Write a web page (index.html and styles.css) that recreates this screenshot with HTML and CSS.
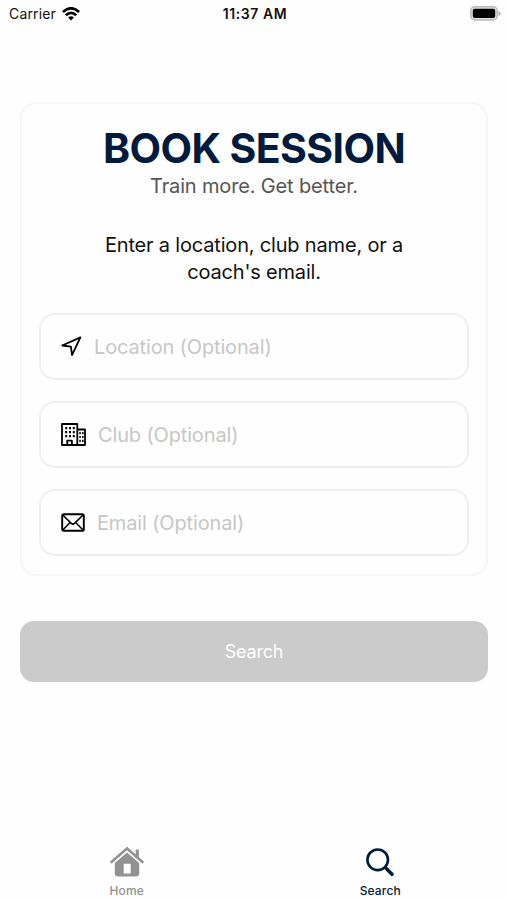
FILE: index.html
```html
<!DOCTYPE html>
<html lang="en">
<head>
<meta charset="utf-8">
<title>Book Session</title>
<link rel="stylesheet" href="styles.css">
</head>
<body>
<header class="status">
  <div class="carrier"><span class="carrier-name">Carrier</span>
    <svg class="wifi" width="18" height="14" viewBox="0 0 18 14" fill="none" stroke="#000" stroke-width="2.7"><path d="M.9 4.9Q9-2.3 17.1 4.9M3.8 8.2Q9 3.4 14.2 8.2"/><path d="M9 13.4 6.1 10.4Q9 8 11.9 10.4Z" fill="#000" stroke="none"/></svg>
  </div>
  <time class="clock">11:37 AM</time>
  <svg class="battery" width="31" height="15" viewBox="0 0 31 15"><rect x=".8" y=".8" width="26.4" height="13.2" rx="4" fill="#ddd" stroke="#bbb" stroke-width="1.5"/><rect x="2.8" y="2.8" width="22.4" height="9.2" rx="2" fill="#000"/><path d="M28.5 5v5Q30.6 9.1 30.6 7.5T28.5 5Z" fill="#b0b0b0"/></svg>
</header>
<main class="content">
  <section class="card">
    <h1 class="title">BOOK SESSION</h1>
    <p class="tagline">Train more. Get better.</p>
    <p class="prompt">Enter a location, club name, or a<br>coach's email.</p>
    <div class="fields">
      <div class="field location">
        <svg width="21" height="21" viewBox="0 0 21 21" fill="none" stroke="#000" stroke-width="1.8" stroke-linejoin="round"><path d="M19.4 1.4 1.2 9.5l8.7 1.1 1.1 8.6Z"/></svg>
        <span>Location (Optional)</span>
      </div>
      <div class="field club">
        <svg width="25" height="23" viewBox="0 0 25 23" fill="none" stroke="#000" stroke-width="1.8" stroke-linejoin="round"><path d="M1 22V1h15.3v21ZM16.3 6.5H24V22h-7.7M6.2 22v-4.3h4.7V22"/><path d="M4.2 5.2h2M8 5.2h2M11.8 5.2h2M4.2 9.2h2M8 9.2h2M11.8 9.2h2M4.2 13.2h2M8 13.2h2M11.8 13.2h2M18.3 10.2h1.5M21.1 10.2h1.5M18.3 14h1.5M21.1 14h1.5M18.3 17.8h1.5M21.1 17.8h1.5" stroke-width="2.2"/></svg>
        <span>Club (Optional)</span>
      </div>
      <div class="field email">
        <svg width="24" height="19" viewBox="0 0 24 19" fill="none" stroke="#000" stroke-width="1.9" stroke-linejoin="round"><rect x="1.2" y="1.2" width="21.6" height="16.6" rx="1.6"/><path d="m1.5 1.8 8.8 8.6q1.6 1.4 3.2 0l8.8-8.6M1.8 17.1l7.1-7.4M22 17.1l-7.1-7.4" stroke-width="1.5"/></svg>
        <span>Email (Optional)</span>
      </div>
    </div>
  </section>
  <button class="submit" type="button">Search</button>
</main>
<nav class="tabs">
  <a class="tab home">
    <svg width="34" height="32" viewBox="0 0 34 32"><path d="M1.5 16 17 2.5 32.5 16" fill="none" stroke="#929292" stroke-width="2.6" stroke-linecap="round"/><path d="M25.7 3.5h3.2v8.2l-3.2-2.8ZM17 6.5 29.2 17v10.2q0 3.3-3.3 3.3H8.1q-3.3 0-3.3-3.3V17ZM13.7 17.8v9.7h7v-9.7Z" fill="#929292" fill-rule="evenodd"/></svg>
    <span>Home</span>
  </a>
  <a class="tab search">
    <svg width="34" height="32" viewBox="0 0 34 32" fill="none" stroke="#001b3d" stroke-linecap="round"><circle cx="14.7" cy="13.8" r="10.3" stroke-width="2.6"/><path d="m22 21.2 1.5 1.5" stroke-width="2.5"/><path d="m24 23.2 5 5" stroke-width="3.6"/></svg>
    <span>Search</span>
  </a>
</nav>
</body>
</html>
```
FILE: styles.css
```css
* { box-sizing: border-box; }
body {
  margin: 0;
  height: 900px;
  display: flex;
  flex-direction: column;
  overflow: hidden;
  background: #fefefe;
  color: #111;
  font-family: Inter, "Liberation Sans", sans-serif;
}
h1, p { margin: 0; }
svg { display: block; flex: none; }
.status {
  height: 28px;
  padding: 0 6px 1px 9px;
  display: grid;
  grid-template-columns: 1fr auto 1fr;
  align-items: center;
  font-size: 14px;
}
.carrier { display: flex; align-items: center; gap: 6px; letter-spacing: 0.15px; }
.clock { font-weight: 600; letter-spacing: 0.6px; }
.battery { justify-self: end; }
.content { flex: 1; padding: 74px 19px 0 20px; }
.card {
  height: 474px;
  padding: 19px 17px 0;
  border: 2px solid #f6f6f6;
  border-radius: 16px;
  text-align: center;
}
.title {
  font-size: 41px;
  line-height: 50px;
  font-weight: 700;
  letter-spacing: -0.6px;
  color: #001b3d;
  white-space: nowrap;
}
.tagline { margin-top: 1px; font-size: 20px; line-height: 24px; letter-spacing: -0.15px; color: #555; }
.prompt { margin-top: 34px; font-size: 20px; line-height: 27px; letter-spacing: -0.18px; }
.fields { margin-top: 27px; display: grid; gap: 21px; }
.field {
  height: 67px;
  padding-left: 20px;
  display: flex;
  align-items: center;
  gap: 12px;
  border: 2px solid #efefef;
  border-radius: 16px;
  color: #c7c7c7;
  font-size: 20px;
  letter-spacing: -0.15px;
}
.submit {
  display: block;
  width: 100%;
  height: 61px;
  margin-top: 45px;
  border: 0;
  border-radius: 14px;
  background: #cbcbcb;
  color: #fff;
  font: 18px Inter, "Liberation Sans", sans-serif;
  letter-spacing: -0.2px;
}
.tabs { height: 54px; display: grid; grid-template-columns: 1fr 1fr; }
.tab {
  display: flex;
  flex-direction: column;
  align-items: center;
  gap: 5px;
  font-size: 12px;
  line-height: 16px;
  font-weight: 500;
  letter-spacing: 0.15px;
}
.home { color: #929292; }
.search { color: #001b3d; }
```
